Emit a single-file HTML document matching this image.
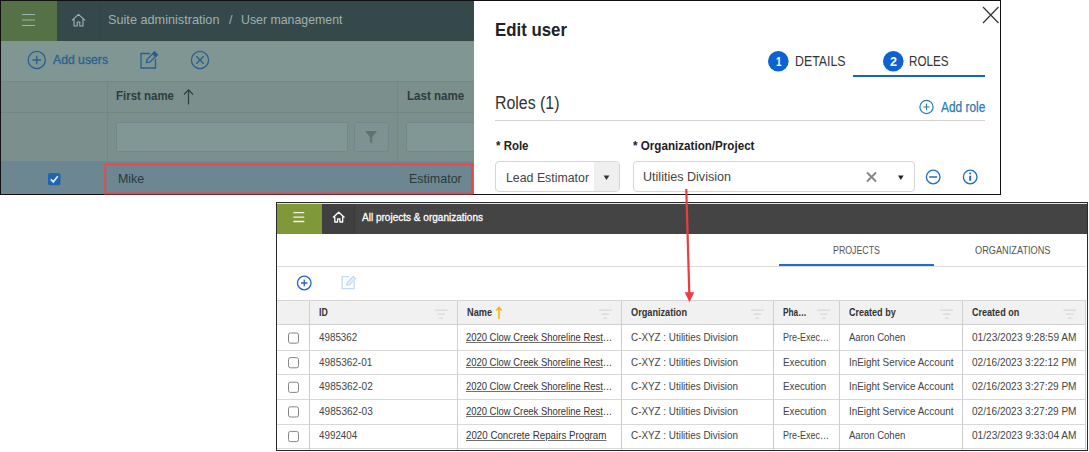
<!DOCTYPE html>
<html lang="en">
<head>
<meta charset="utf-8">
<title>Edit user - Roles</title>
<style>
html,body{margin:0;padding:0;background:#fff;}
body{width:1089px;height:452px;position:relative;overflow:hidden;font-family:"Liberation Sans",Arial,sans-serif;}
.b{position:absolute;box-sizing:border-box;}
u{text-decoration:underline;text-decoration-thickness:1px;text-underline-offset:1px;text-decoration-color:#707070;}
.t{position:absolute;white-space:pre;transform-origin:0 50%;font-family:"Liberation Sans",Arial,sans-serif;}
svg{position:absolute;left:0;top:0;}
</style>
</head>
<body>
<!-- ===== top screenshot: user management + edit user panel ===== -->
<div class="b" style="left:0;top:0;width:1001px;height:195px;background:#111;"></div>
<div class="b" style="left:1px;top:1px;width:473px;height:40px;background:#36494a;"></div>
<div class="b" style="left:1px;top:1px;width:56px;height:40px;background:#547245;"></div>
<div class="b" style="left:99px;top:1px;width:1px;height:40px;background:#324445;"></div>
<div class="b" style="left:1px;top:41px;width:473px;height:40px;background:#809693;"></div>
<div class="b" style="left:1px;top:81px;width:473px;height:81px;background:#7b908d;border-top:1px solid #748986;"></div>
<div class="b" style="left:1px;top:112px;width:473px;height:1px;background:#738885;"></div>
<div class="b" style="left:1px;top:161px;width:473px;height:1px;background:#738885;"></div>
<div class="b" style="left:1px;top:162px;width:473px;height:32px;background:#6c8791;"></div>
<div class="b" style="left:107px;top:82px;width:1px;height:112px;background:#72878a;"></div>
<div class="b" style="left:397px;top:82px;width:1px;height:112px;background:#72878a;"></div>
<div class="b" style="left:116px;top:122px;width:232px;height:30px;border:1px solid #73888a;border-radius:2px;background:#819795;"></div>
<div class="b" style="left:354px;top:122px;width:35px;height:30px;border:1px solid #72878a;border-radius:3px;background:#7e9391;"></div>
<div class="b" style="left:406px;top:122px;width:80px;height:30px;border:1px solid #73888a;border-radius:2px;background:#819795;"></div>
<div class="b" style="left:474px;top:1px;width:526px;height:193px;background:#fff;"></div>
<!-- role select -->
<div class="b" style="left:495px;top:161px;width:125px;height:31px;border:1px solid #d6d6d6;border-radius:4px;background:#fff;overflow:hidden;"><div class="b" style="right:0;top:0;width:25px;height:29px;background:#efefef;"></div></div>
<div class="b" style="left:633px;top:161px;width:282px;height:31px;border:1px solid #d6d6d6;border-radius:4px;background:#fff;"></div>
<div class="b" style="left:495px;top:120px;width:490px;height:1px;background:#d2d2d2;"></div>
<div class="b" style="left:853px;top:75px;width:132px;height:2px;background:#1565c8;"></div>

<!-- ===== bottom screenshot: projects & organizations ===== -->
<div class="b" style="left:276px;top:202px;width:812px;height:249px;background:#fff;border:1px solid #2a2a2a;"></div>
<div class="b" style="left:277px;top:203px;width:810px;height:1px;background:#e4e4e4;"></div>
<div class="b" style="left:277px;top:204px;width:810px;height:30px;background:#444444;"></div>
<div class="b" style="left:277px;top:204px;width:45px;height:30px;background:#7f9839;"></div>
<div class="b" style="left:322px;top:204px;width:33px;height:30px;background:#404040;border-right:1px solid #3a3a3a;"></div>
<div class="b" style="left:277px;top:266px;width:809px;height:1px;background:#dcdcdc;"></div>
<div class="b" style="left:779px;top:264px;width:155px;height:2px;background:#1e6fd2;"></div>
<div class="b" style="left:277px;top:300px;width:809px;height:25px;background:#f1f1f1;border-top:1px solid #d4d4d4;border-bottom:1px solid #d0d0d0;"></div>
<div class="b" style="left:277px;top:350px;width:809px;height:1px;background:#d8d8d8;"></div>
<div class="b" style="left:277px;top:374px;width:809px;height:1px;background:#d8d8d8;"></div>
<div class="b" style="left:277px;top:399px;width:809px;height:1px;background:#d8d8d8;"></div>
<div class="b" style="left:277px;top:424px;width:809px;height:1px;background:#d8d8d8;"></div>
<div class="b" style="left:277px;top:448px;width:809px;height:1px;background:#d8d8d8;"></div>
<div class="b" style="left:309px;top:301px;width:1px;height:149px;background:#cfcfcf;"></div>
<div class="b" style="left:457px;top:301px;width:1px;height:149px;background:#cfcfcf;"></div>
<div class="b" style="left:621px;top:301px;width:1px;height:149px;background:#cfcfcf;"></div>
<div class="b" style="left:773px;top:301px;width:1px;height:149px;background:#cfcfcf;"></div>
<div class="b" style="left:839px;top:301px;width:1px;height:149px;background:#cfcfcf;"></div>
<div class="b" style="left:962px;top:301px;width:1px;height:149px;background:#cfcfcf;"></div>
<div class="b" style="left:1085px;top:301px;width:1px;height:149px;background:#cfcfcf;"></div>

<svg width="1089" height="452" viewBox="0 0 1089 452" fill="none">
<!-- top-left dimmed icons -->
<g stroke="#a0b4b0" stroke-width="1.1"><path d="M22 14.5H35M22 20H35M22 25.5H35"/></g>
<g stroke="#a0b2b3" stroke-width="1.15" stroke-linejoin="round"><path d="M72 20.3L78.5 14.3L85 20.3M74 19V26H77.2V22H79.8V26H83V19"/></g>
<g stroke="#27608f" stroke-width="1.3"><circle cx="36.75" cy="60" r="8.6"/><path d="M32.5 60H41M36.75 55.75V64.25"/>
<path d="M150 53.5H141V68H155.5V59"/><path d="M146.5 62.5L147 59.5L154.5 52L157.3 54.8L149.8 62.2Z"/><path d="M154.5 52L157.3 54.8L155.6 56.5L152.8 53.7Z" fill="#27608f"/>
<circle cx="200" cy="60" r="8.6"/><path d="M196.3 56.3L203.7 63.7M203.7 56.3L196.3 63.7"/></g>
<g stroke="#2e3d3e" stroke-width="1.2"><path d="M188.5 89.8V104.5M184 94.5L188.5 89.8L193 94.5"/></g>
<path d="M365 131H377L372.2 137V143.5L369.8 142V137Z" fill="#5e7472"/>
<rect x="48" y="173" width="12.5" height="12.2" rx="2" fill="#1e66ad"/>
<path d="M50.8 179.3L53.3 181.9L57.8 176.3" stroke="#dfe9ee" stroke-width="1.7"/>
<rect x="105.25" y="164.25" width="366.75" height="29.25" stroke="#f2434b" stroke-width="1.9"/>
<!-- panel icons -->
<path d="M983 7L998.5 23M998.5 7L983 23" stroke="#333" stroke-width="1.2"/>
<circle cx="778.3" cy="61.3" r="10.3" fill="#0b62d0"/><circle cx="893.3" cy="61.3" r="10.3" fill="#0b62d0"/>
<g stroke="#2a7ab8" stroke-width="1.2"><circle cx="926.5" cy="107" r="6.6"/><path d="M923.3 107H929.7M926.5 103.8V110.2"/></g>
<path d="M603.6 175.6H609.4L606.5 180Z" fill="#333"/>
<path d="M867 172.5L876 181.5M876 172.5L867 181.5" stroke="#858585" stroke-width="1.9"/>
<path d="M898 175.6H903.6L900.8 180Z" fill="#222"/>
<g stroke="#2469c8" stroke-width="1.3"><circle cx="933.2" cy="177" r="6.8"/><path d="M929.2 177H937.2" stroke-width="1.5"/>
<circle cx="970.2" cy="177" r="6.8"/><path d="M970.2 175.7V180.8" stroke-width="1.9"/><path d="M970.2 172.5V174.3" stroke-width="1.9"/></g>
<!-- bottom icons -->
<g stroke="#f2f4e6" stroke-width="1.4"><path d="M293.3 212.6H304.3M293.3 217.1H304.3M293.3 221.5H304.3"/></g>
<g stroke="#fff" stroke-width="1.3" stroke-linejoin="round"><path d="M333 217.5L338.75 212.3L344.5 217.5M334.8 216.5V222H337.6V218.8H339.9V222H342.7V216.5"/></g>
<g stroke="#2462c8" stroke-width="1.3"><circle cx="304.25" cy="283" r="6.8"/><path d="M301 283H307.5M304.25 279.75V286.25"/></g>
<g stroke="#c3daf0" stroke-width="1.3" transform="translate(-0.3 -0.9)"><path d="M349.5 277.5H342.5V289.5H354.5V282.5"/><path d="M347 286L347.4 283.6L353.6 277.4L355.9 279.7L349.6 285.8Z" fill="#c3daf0" fill-opacity=".4"/></g>
<g stroke="#f5b400" stroke-width="1.5"><path d="M499 307.5V319M496.3 310.5L499 307.3L501.7 310.5"/></g>
<g fill="#dcdcdc">
<g id="f1"><rect x="435" y="309.5" width="12.5" height="1.5"/><rect x="437.5" y="313.5" width="7.5" height="1.5"/><rect x="439.5" y="317.5" width="3.5" height="1.5"/></g>
<g transform="translate(164 0)"><rect x="435" y="309.5" width="12.5" height="1.5"/><rect x="437.5" y="313.5" width="7.5" height="1.5"/><rect x="439.5" y="317.5" width="3.5" height="1.5"/></g>
<g transform="translate(316 0)"><rect x="435" y="309.5" width="12.5" height="1.5"/><rect x="437.5" y="313.5" width="7.5" height="1.5"/><rect x="439.5" y="317.5" width="3.5" height="1.5"/></g>
<g transform="translate(382.5 0)"><rect x="435" y="309.5" width="12.5" height="1.5"/><rect x="437.5" y="313.5" width="7.5" height="1.5"/><rect x="439.5" y="317.5" width="3.5" height="1.5"/></g>
<g transform="translate(505.5 0)"><rect x="435" y="309.5" width="12.5" height="1.5"/><rect x="437.5" y="313.5" width="7.5" height="1.5"/><rect x="439.5" y="317.5" width="3.5" height="1.5"/></g>
<g transform="translate(628.5 0)"><rect x="435" y="309.5" width="12.5" height="1.5"/><rect x="437.5" y="313.5" width="7.5" height="1.5"/><rect x="439.5" y="317.5" width="3.5" height="1.5"/></g>
</g>
<g stroke="#858585" stroke-width="1" fill="#fff">
<rect x="288.5" y="333" width="10" height="10.2" rx="2"/>
<rect x="288.5" y="357.6" width="10" height="10.2" rx="2"/>
<rect x="288.5" y="382.2" width="10" height="10.2" rx="2"/>
<rect x="288.5" y="406.8" width="10" height="10.2" rx="2"/>
<rect x="288.5" y="431.4" width="10" height="10.2" rx="2"/>
</g>
<!-- red callout arrow -->
<path d="M686.3 189L689.3 294" stroke="#ee3b3e" stroke-width="2.2"/>
<path d="M684.8 292.3H694.2L689.5 302.3Z" fill="#ee3b3e"/>
</svg>
<span class="t" style="left:107.50px;top:13.37px;font-size:13.5px;line-height:13.5px;font-weight:400;color:#9fb1b0;transform:scaleX(0.9404);">Suite administration</span>
<span class="t" style="left:229.00px;top:13.37px;font-size:13.5px;line-height:13.5px;font-weight:400;color:#9fb1b0;transform:scaleX(0.9295);">/</span>
<span class="t" style="left:240.50px;top:13.37px;font-size:13.5px;line-height:13.5px;font-weight:400;color:#9fb1b0;transform:scaleX(0.9139);">User management</span>
<span class="t" style="left:52.50px;top:52.70px;font-size:13px;line-height:13px;font-weight:400;color:#27608f;transform:scaleX(0.9394);-webkit-text-stroke:0.3px #27608f;">Add users</span>
<span class="t" style="left:115.75px;top:89.67px;font-size:12.5px;line-height:12.5px;font-weight:700;color:#2e3d3e;transform:scaleX(0.9174);">First name</span>
<span class="t" style="left:406.50px;top:89.67px;font-size:12.5px;line-height:12.5px;font-weight:700;color:#2e3d3e;transform:scaleX(0.9257);">Last name</span>
<span class="t" style="left:117.50px;top:172.00px;font-size:13px;line-height:13px;font-weight:400;color:#2b3a3d;transform:scaleX(0.9562);">Mike</span>
<span class="t" style="left:408.50px;top:172.00px;font-size:13px;line-height:13px;font-weight:400;color:#2b3a3d;transform:scaleX(0.9607);">Estimator</span>
<span class="t" style="left:495.00px;top:21.34px;font-size:18.5px;line-height:18.5px;font-weight:700;color:#222222;transform:scaleX(0.9094);">Edit user</span>
<span class="t" style="left:795.00px;top:53.73px;font-size:14.5px;line-height:14.5px;font-weight:400;color:#333333;transform:scaleX(0.8508);">DETAILS</span>
<span class="t" style="left:909.00px;top:53.73px;font-size:14.5px;line-height:14.5px;font-weight:400;color:#333333;transform:scaleX(0.8033);">ROLES</span>
<span class="t" style="left:775.60px;top:54.57px;font-size:13.5px;line-height:13.5px;font-weight:700;color:#ffffff;transform:scaleX(0.7318);">1</span>
<span class="t" style="left:889.90px;top:54.57px;font-size:13.5px;line-height:13.5px;font-weight:700;color:#ffffff;transform:scaleX(0.9314);">2</span>
<span class="t" style="left:495.00px;top:94.06px;font-size:18px;line-height:18px;font-weight:400;color:#333333;transform:scaleX(0.8832);">Roles (1)</span>
<span class="t" style="left:940.75px;top:99.65px;font-size:14px;line-height:14px;font-weight:400;color:#2a7ab8;transform:scaleX(0.8484);-webkit-text-stroke:0.25px #2a7ab8;">Add role</span>
<span class="t" style="left:495.50px;top:140.39px;font-size:12.3px;line-height:12.3px;font-weight:700;color:#222222;transform:scaleX(0.9323);">* Role</span>
<span class="t" style="left:633.00px;top:140.39px;font-size:12.3px;line-height:12.3px;font-weight:700;color:#222222;transform:scaleX(0.9458);">* Organization/Project</span>
<span class="t" style="left:506.00px;top:170.54px;font-size:13.3px;line-height:13.3px;font-weight:400;color:#444444;transform:scaleX(0.9280);">Lead Estimator</span>
<span class="t" style="left:643.00px;top:169.80px;font-size:13px;line-height:13px;font-weight:400;color:#444444;transform:scaleX(0.9667);">Utilities Division</span>
<span class="t" style="left:362.00px;top:211.52px;font-size:11.5px;line-height:11.5px;font-weight:400;color:#ffffff;transform:scaleX(0.8723);-webkit-text-stroke:0.3px #ffffff;">All projects &amp; organizations</span>
<span class="t" style="left:832.75px;top:245.29px;font-size:11px;line-height:11px;font-weight:400;color:#555555;transform:scaleX(0.8009);">PROJECTS</span>
<span class="t" style="left:975.00px;top:245.29px;font-size:11px;line-height:11px;font-weight:400;color:#555555;transform:scaleX(0.8366);">ORGANIZATIONS</span>
<span class="t" style="left:318.75px;top:307.11px;font-size:10.5px;line-height:10.5px;font-weight:700;color:#333333;transform:scaleX(0.8333);">ID</span>
<span class="t" style="left:466.50px;top:307.11px;font-size:10.5px;line-height:10.5px;font-weight:700;color:#333333;transform:scaleX(0.8738);">Name</span>
<span class="t" style="left:630.50px;top:307.11px;font-size:10.5px;line-height:10.5px;font-weight:700;color:#333333;transform:scaleX(0.8727);">Organization</span>
<span class="t" style="left:783.00px;top:307.11px;font-size:10.5px;line-height:10.5px;font-weight:700;color:#333333;transform:scaleX(0.7895);">Pha…</span>
<span class="t" style="left:848.60px;top:307.11px;font-size:10.5px;line-height:10.5px;font-weight:700;color:#333333;transform:scaleX(0.8603);">Created by</span>
<span class="t" style="left:971.60px;top:307.11px;font-size:10.5px;line-height:10.5px;font-weight:700;color:#333333;transform:scaleX(0.8606);">Created on</span>
<span class="t" style="left:318.75px;top:331.97px;font-size:11.5px;line-height:11.5px;font-weight:400;color:#444444;transform:scaleX(0.8542);">4985362</span>
<span class="t" style="left:466.25px;top:331.97px;font-size:11.5px;line-height:11.5px;font-weight:400;color:#333333;transform:scaleX(0.8200);"><u>2020 Clow Creek Shoreline Rest</u>…</span>
<span class="t" style="left:630.50px;top:331.97px;font-size:11.5px;line-height:11.5px;font-weight:400;color:#444444;transform:scaleX(0.8587);">C-XYZ : Utilities Division</span>
<span class="t" style="left:783.00px;top:331.97px;font-size:11.5px;line-height:11.5px;font-weight:400;color:#444444;transform:scaleX(0.7824);">Pre-Exec…</span>
<span class="t" style="left:848.60px;top:331.97px;font-size:11.5px;line-height:11.5px;font-weight:400;color:#444444;transform:scaleX(0.8306);">Aaron Cohen</span>
<span class="t" style="left:971.60px;top:331.97px;font-size:11.5px;line-height:11.5px;font-weight:400;color:#444444;transform:scaleX(0.8786);">01/23/2023 9:28:59 AM</span>
<span class="t" style="left:318.75px;top:356.57px;font-size:11.5px;line-height:11.5px;font-weight:400;color:#444444;transform:scaleX(0.8672);">4985362-01</span>
<span class="t" style="left:466.25px;top:356.57px;font-size:11.5px;line-height:11.5px;font-weight:400;color:#333333;transform:scaleX(0.8200);"><u>2020 Clow Creek Shoreline Rest</u>…</span>
<span class="t" style="left:630.50px;top:356.57px;font-size:11.5px;line-height:11.5px;font-weight:400;color:#444444;transform:scaleX(0.8587);">C-XYZ : Utilities Division</span>
<span class="t" style="left:783.00px;top:356.57px;font-size:11.5px;line-height:11.5px;font-weight:400;color:#444444;transform:scaleX(0.8552);">Execution</span>
<span class="t" style="left:848.60px;top:356.57px;font-size:11.5px;line-height:11.5px;font-weight:400;color:#444444;transform:scaleX(0.8603);">InEight Service Account</span>
<span class="t" style="left:971.60px;top:356.57px;font-size:11.5px;line-height:11.5px;font-weight:400;color:#444444;transform:scaleX(0.8739);">02/16/2023 3:22:12 PM</span>
<span class="t" style="left:318.75px;top:381.17px;font-size:11.5px;line-height:11.5px;font-weight:400;color:#444444;transform:scaleX(0.8753);">4985362-02</span>
<span class="t" style="left:466.25px;top:381.17px;font-size:11.5px;line-height:11.5px;font-weight:400;color:#333333;transform:scaleX(0.8200);"><u>2020 Clow Creek Shoreline Rest</u>…</span>
<span class="t" style="left:630.50px;top:381.17px;font-size:11.5px;line-height:11.5px;font-weight:400;color:#444444;transform:scaleX(0.8587);">C-XYZ : Utilities Division</span>
<span class="t" style="left:783.00px;top:381.17px;font-size:11.5px;line-height:11.5px;font-weight:400;color:#444444;transform:scaleX(0.8552);">Execution</span>
<span class="t" style="left:848.60px;top:381.17px;font-size:11.5px;line-height:11.5px;font-weight:400;color:#444444;transform:scaleX(0.8603);">InEight Service Account</span>
<span class="t" style="left:971.60px;top:381.17px;font-size:11.5px;line-height:11.5px;font-weight:400;color:#444444;transform:scaleX(0.8739);">02/16/2023 3:27:29 PM</span>
<span class="t" style="left:318.75px;top:405.77px;font-size:11.5px;line-height:11.5px;font-weight:400;color:#444444;transform:scaleX(0.8753);">4985362-03</span>
<span class="t" style="left:466.25px;top:405.77px;font-size:11.5px;line-height:11.5px;font-weight:400;color:#333333;transform:scaleX(0.8200);"><u>2020 Clow Creek Shoreline Rest</u>…</span>
<span class="t" style="left:630.50px;top:405.77px;font-size:11.5px;line-height:11.5px;font-weight:400;color:#444444;transform:scaleX(0.8587);">C-XYZ : Utilities Division</span>
<span class="t" style="left:783.00px;top:405.77px;font-size:11.5px;line-height:11.5px;font-weight:400;color:#444444;transform:scaleX(0.8552);">Execution</span>
<span class="t" style="left:848.60px;top:405.77px;font-size:11.5px;line-height:11.5px;font-weight:400;color:#444444;transform:scaleX(0.8603);">InEight Service Account</span>
<span class="t" style="left:971.60px;top:405.77px;font-size:11.5px;line-height:11.5px;font-weight:400;color:#444444;transform:scaleX(0.8739);">02/16/2023 3:27:29 PM</span>
<span class="t" style="left:318.75px;top:430.37px;font-size:11.5px;line-height:11.5px;font-weight:400;color:#444444;transform:scaleX(0.8542);">4992404</span>
<span class="t" style="left:466.25px;top:430.37px;font-size:11.5px;line-height:11.5px;font-weight:400;color:#333333;transform:scaleX(0.8480);"><u>2020 Concrete Repairs Program</u></span>
<span class="t" style="left:630.50px;top:430.37px;font-size:11.5px;line-height:11.5px;font-weight:400;color:#444444;transform:scaleX(0.8587);">C-XYZ : Utilities Division</span>
<span class="t" style="left:783.00px;top:430.37px;font-size:11.5px;line-height:11.5px;font-weight:400;color:#444444;transform:scaleX(0.7824);">Pre-Exec…</span>
<span class="t" style="left:848.60px;top:430.37px;font-size:11.5px;line-height:11.5px;font-weight:400;color:#444444;transform:scaleX(0.8306);">Aaron Cohen</span>
<span class="t" style="left:971.60px;top:430.37px;font-size:11.5px;line-height:11.5px;font-weight:400;color:#444444;transform:scaleX(0.8786);">01/23/2023 9:33:04 AM</span>


</body>
</html>
